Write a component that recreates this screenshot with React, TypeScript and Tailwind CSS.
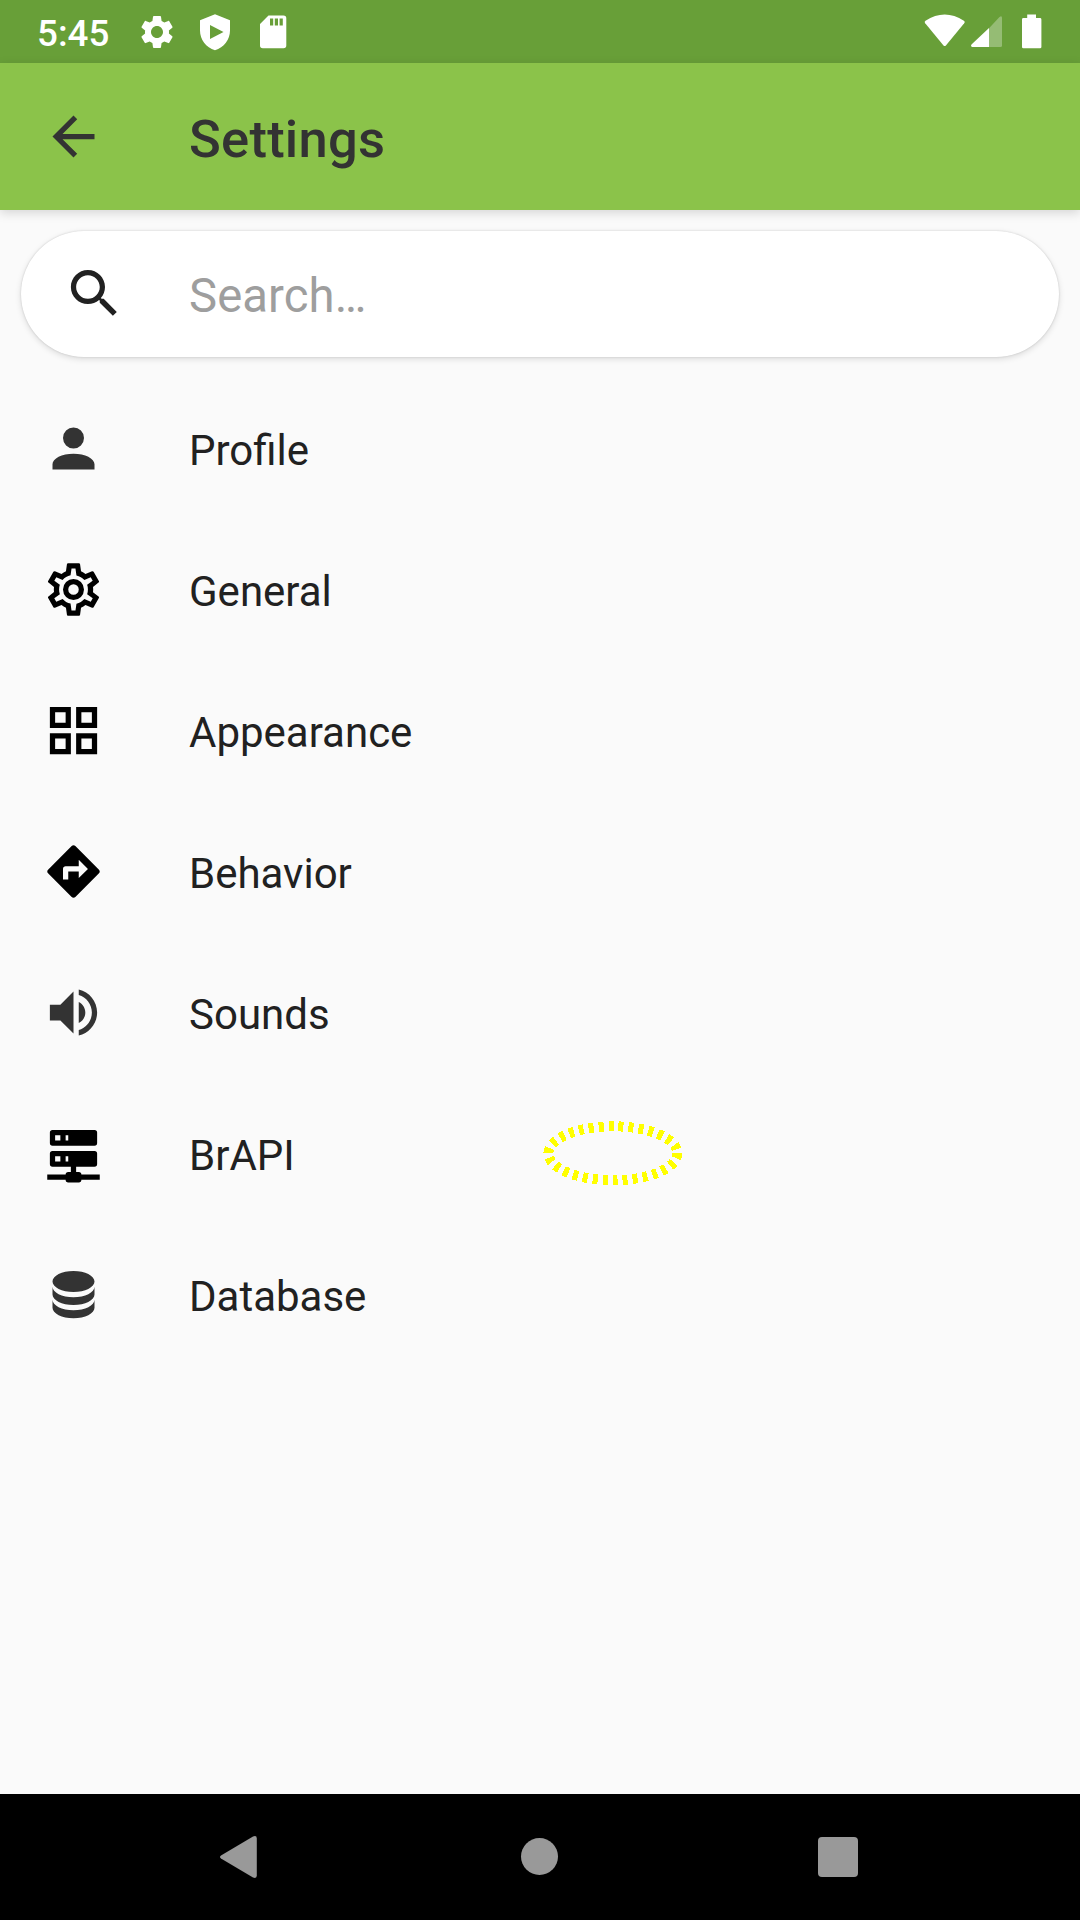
import type { ReactNode } from "react";

type IconProps = { d: string; className?: string };

function Icon({ d, className = "" }: IconProps) {
  return (
    <svg viewBox="0 0 24 24" className={`size-[63px] shrink-0 ${className}`} fill="currentColor" fillRule="evenodd">
      <path d={d} />
    </svg>
  );
}

const ICONS = {
  back: "M20 11H7.83l5.59-5.59L12 4l-8 8 8 8 1.41-1.41L7.83 13H20v-2z",
  search:
    "M15.5 14h-.79l-.28-.27C15.41 12.59 16 11.11 16 9.5 16 5.91 13.09 3 9.5 3S3 5.91 3 9.5 5.91 16 9.5 16c1.61 0 3.09-.59 4.23-1.57l.27.28v.79l5 4.99L20.49 19l-4.99-5zm-6 0C7.01 14 5 11.99 5 9.5S7.01 5 9.5 5 14 7.01 14 9.5 11.99 14 9.5 14z",
  person:
    "M12,4A4,4 0 0,1 16,8A4,4 0 0,1 12,12A4,4 0 0,1 8,8A4,4 0 0,1 12,4M12,14C16.42,14 20,15.79 20,18V20H4V18C4,15.79 7.58,14 12,14Z",
  cog: "M12,8A4,4 0 0,1 16,12A4,4 0 0,1 12,16A4,4 0 0,1 8,12A4,4 0 0,1 12,8M12,10A2,2 0 0,0 10,12A2,2 0 0,0 12,14A2,2 0 0,0 14,12A2,2 0 0,0 12,10M10,22C9.75,22 9.54,21.82 9.5,21.58L9.13,18.93C8.5,18.68 7.96,18.34 7.44,17.94L4.95,18.95C4.73,19.03 4.46,18.95 4.34,18.73L2.34,15.27C2.21,15.05 2.27,14.78 2.46,14.63L4.57,12.97L4.5,12L4.57,11L2.46,9.37C2.27,9.22 2.21,8.95 2.34,8.73L4.34,5.27C4.46,5.05 4.73,4.96 4.95,5.05L7.44,6.05C7.96,5.66 8.5,5.32 9.13,5.07L9.5,2.42C9.54,2.18 9.75,2 10,2H14C14.25,2 14.46,2.18 14.5,2.42L14.87,5.07C15.5,5.32 16.04,5.66 16.56,6.05L19.05,5.05C19.27,4.96 19.54,5.05 19.66,5.27L21.66,8.73C21.79,8.95 21.73,9.22 21.54,9.37L19.43,11L19.5,12L19.43,13L21.54,14.63C21.73,14.78 21.79,15.05 21.66,15.27L19.66,18.73C19.54,18.95 19.27,19.04 19.05,18.95L16.56,17.95C16.04,18.34 15.5,18.68 14.87,18.93L14.5,21.58C14.46,21.82 14.25,22 14,22H10M11.25,4L10.88,6.61C9.68,6.86 8.62,7.5 7.85,8.39L5.44,7.35L4.69,8.65L6.8,10.2C6.4,11.37 6.4,12.64 6.8,13.8L4.68,15.36L5.43,16.66L7.86,15.62C8.63,16.5 9.68,17.14 10.87,17.38L11.24,20H12.76L13.13,17.39C14.32,17.14 15.37,16.5 16.14,15.62L18.57,16.66L19.32,15.36L17.2,13.81C17.6,12.64 17.6,11.37 17.2,10.2L19.31,8.65L18.56,7.35L16.15,8.39C15.38,7.5 14.32,6.86 13.12,6.62L12.75,4H11.25Z",
  grid: "M3 3h8v8H3zM5 5v4h4V5zM13 3h8v8h-8zM15 5v4h4V5zM3 13h8v8H3zM5 15v4h4v-4zM13 13h8v8h-8zM15 15v4h4v-4z",
  directions:
    "M21.71 11.29l-9-9c-.39-.39-1.02-.39-1.41 0l-9 9c-.39.39-.39 1.02 0 1.41l9 9c.39.39 1.02.39 1.41 0l9-9c.39-.38.39-1.01 0-1.41zM14 14.5V12h-4v3H8v-4c0-.55.45-1 1-1h5V7.5l3.5 3.5-3.5 3.5z",
  volume:
    "M3 9v6h4l5 5V4L7 9H3zm13.5 3c0-1.77-1.02-3.29-2.5-4.03v8.05c1.48-.73 2.5-2.25 2.5-4.02zM14 3.23v2.06c2.89.86 5 3.54 5 6.71s-2.11 5.85-5 6.71v2.06c4.01-.91 7-4.49 7-8.77s-2.99-7.86-7-8.77z",
  server:
    "M13,19H14A1,1 0 0,1 15,20H22V22H15A1,1 0 0,1 14,23H10A1,1 0 0,1 9,22H2V20H9A1,1 0 0,1 10,19H11V17H4A1,1 0 0,1 3,16V12A1,1 0 0,1 4,11H20A1,1 0 0,1 21,12V16A1,1 0 0,1 20,17H13V19M4,3H20A1,1 0 0,1 21,4V8A1,1 0 0,1 20,9H4A1,1 0 0,1 3,8V4A1,1 0 0,1 4,3M9,7H10V5H9V7M9,15H10V13H9V15M5,5V7H7V5H5M5,13V15H7V13H5Z",
  database:
    "M12,3C7.58,3 4,4.79 4,7C4,9.21 7.58,11 12,11C16.42,11 20,9.21 20,7C20,4.79 16.42,3 12,3M4,9V12C4,14.21 7.58,16 12,16C16.42,16 20,14.21 20,12V9C20,11.21 16.42,13 12,13C7.58,13 4,11.21 4,9M4,14V17C4,19.21 7.58,21 12,21C16.42,21 20,19.21 20,17V14C20,16.21 16.42,18 12,18C7.58,18 4,16.21 4,14Z",
  settings:
    "M19.14 12.94c.04-.3.06-.61.06-.94 0-.32-.02-.64-.07-.94l2.03-1.58c.18-.14.23-.41.12-.61l-1.92-3.32c-.12-.22-.37-.29-.59-.22l-2.39.96c-.5-.38-1.03-.7-1.62-.94l-.36-2.54c-.04-.24-.24-.41-.48-.41h-3.84c-.24 0-.43.17-.47.41l-.36 2.54c-.59.24-1.13.57-1.62.94l-2.39-.96c-.22-.08-.47 0-.59.22L2.74 8.87c-.12.21-.08.47.12.61l2.03 1.58c-.05.3-.09.63-.09.94s.02.64.07.94l-2.03 1.58c-.18.14-.23.41-.12.61l1.92 3.32c.12.22.37.29.59.22l2.39-.96c.5.38 1.03.7 1.62.94l.36 2.54c.05.24.24.41.48.41h3.84c.24 0 .44-.17.47-.41l.36-2.54c.59-.24 1.13-.56 1.62-.94l2.39.96c.22.08.47 0 .59-.22l1.92-3.32c.12-.22.07-.47-.12-.61l-2.01-1.58zM12 15.6c-1.98 0-3.6-1.62-3.6-3.6s1.62-3.6 3.6-3.6 3.6 1.62 3.6 3.6-1.62 3.6-3.6 3.6z",
};

function StatusGlyph({ viewBox, className, children }: { viewBox: string; className: string; children: ReactNode }) {
  return (
    <svg viewBox={viewBox} className={`shrink-0 ${className}`} fill="currentColor" fillRule="evenodd">
      {children}
    </svg>
  );
}

function StatusBar() {
  return (
    <header className="flex h-[63px] items-center justify-between bg-[#689f38] pr-[38px] pl-[37px] text-white">
      <div className="flex items-center">
        <span className="w-[100px] pt-[3px] text-[36.75px] leading-[43px] font-medium">5:45</span>
        <div className="flex gap-[18px]">
          <StatusGlyph viewBox="0 0 24 24" className="size-10">
            <path d={ICONS.settings} />
          </StatusGlyph>
          <StatusGlyph viewBox="0 0 40 40" className="size-10">
            <path d="M20 2.200L35 8.200V18.500C35 27.500 29 35.500 20 38.200C11 35.500 5 27.500 5 18.500V8.200ZM15 13V27L28.500 20Z" />
          </StatusGlyph>
          <StatusGlyph viewBox="0 0 40 40" className="size-10">
            <path d="M15.500 3.500H30.500Q33.300 3.500 33.300 6.300V33.500Q33.300 36.300 30.500 36.300H9.800Q7 36.300 7 33.500V12ZM17 6.500V13.500H20.200V6.500ZM21.800 6.500V13.500H25V6.500ZM26.600 6.500V13.500H29.800V6.500Z" />
          </StatusGlyph>
        </div>
      </div>
      <div className="flex items-center">
        <StatusGlyph viewBox="0 0 42 40" className="mr-[5px] h-10 w-[42px]">
          <path d="M1.200 11.300Q0 9.800 1.500 8.700Q20.700-3.600 39.900 8.700Q41.400 9.800 40.200 11.300L21.900 33.500Q20.700 34.700 19.500 33.500Z" />
        </StatusGlyph>
        <StatusGlyph viewBox="0 0 31 40" className="mr-5 h-10 w-[31px]">
          <path opacity=".3" d="M18 16.200L28.500 5Q31 3.300 31 6V33.500Q31 35 29.500 35H18Z" />
          <path d="M18 16V35H1.200Q-.7 34.500 .5 32.500Z" />
        </StatusGlyph>
        <StatusGlyph viewBox="0 0 20 40" className="h-10 w-5">
          <path d="M5.200 2.500H14V6H18Q19.400 6 19.400 7.400V35Q19.400 36.300 18 36.300H1.400Q0 36.300 0 35V7.400Q0 6 1.400 6H5.200Z" />
        </StatusGlyph>
      </div>
    </header>
  );
}

const ITEMS = [
  { label: "Profile", icon: ICONS.person, tone: "text-[#333333]" },
  { label: "General", icon: ICONS.cog, tone: "text-black" },
  { label: "Appearance", icon: ICONS.grid, tone: "text-black" },
  { label: "Behavior", icon: ICONS.directions, tone: "text-black" },
  { label: "Sounds", icon: ICONS.volume, tone: "text-[#333333]" },
  { label: "BrAPI", icon: ICONS.server, tone: "text-black" },
  { label: "Database", icon: ICONS.database, tone: "text-[#333333]" },
];

export default function App() {
  return (
    <div className="flex h-[1920px] w-[1080px] flex-col overflow-hidden bg-[#fafafa] font-[Roboto,sans-serif]">
      <StatusBar />
      <div className="relative z-10 flex h-[147px] shrink-0 items-center bg-[#8bc34a] pl-[42px] text-[#333333] shadow-[0_3px_10px_rgba(0,0,0,0.15)]">
        <Icon d={ICONS.back} />
        <h1 className="ml-[84px] pt-[5px] text-[52.5px] leading-[62px] font-medium tracking-[0.25px]">Settings</h1>
      </div>

      <main className="flex-1">
        <div className="mx-[21px] mt-[21px] flex h-[126px] items-center rounded-full bg-white pl-[42px] shadow-[0_2px_6px_rgba(0,0,0,0.13),0_0_2px_rgba(0,0,0,0.16)]">
          <Icon d={ICONS.search} className="mb-0.5 text-[#212121]" />
          <span className="ml-[63px] pt-[3px] text-[47.25px] leading-[56px] tracking-[0.1px] text-[#9e9e9e]">Search…</span>
        </div>

        <ul className="mt-[21px]">
          {ITEMS.map(({ label, icon, tone }) => (
            <li key={label} className="relative flex h-[141px] items-center pl-[42px]">
              <Icon d={icon} className={tone} />
              <span className="ml-[84px] pt-[5px] text-[42px] leading-[50px] text-[#212121]">{label}</span>
              {label === "BrAPI" && (
                <svg className="absolute top-[34px] left-[541px] h-[72px] w-[144px]" viewBox="0 0 144 72" shapeRendering="crispEdges">
                  <ellipse cx="71.900" cy="36.300" rx="64.500" ry="27" fill="none" stroke="#ffff00" strokeWidth="10" strokeDasharray="5 5" />
                </svg>
              )}
            </li>
          ))}
        </ul>
      </main>

      <nav className="flex h-[126px] shrink-0 items-center bg-black text-[#999999]">
        <svg viewBox="0 0 38 42" className="ml-[220px] h-[42px] w-[38px]" fill="currentColor">
          <path d="M1 19.500L33 .5Q36.800-1 36.800 2.500V39.500Q36.800 43 33 41.500L1 22.500Q-1 21 1 19.500Z" />
        </svg>
        <span className="mb-0.5 ml-[263px] size-[37px] rounded-full bg-[#999999]" />
        <span className="ml-[260px] size-10 rounded bg-[#999999]" />
      </nav>
    </div>
  );
}
